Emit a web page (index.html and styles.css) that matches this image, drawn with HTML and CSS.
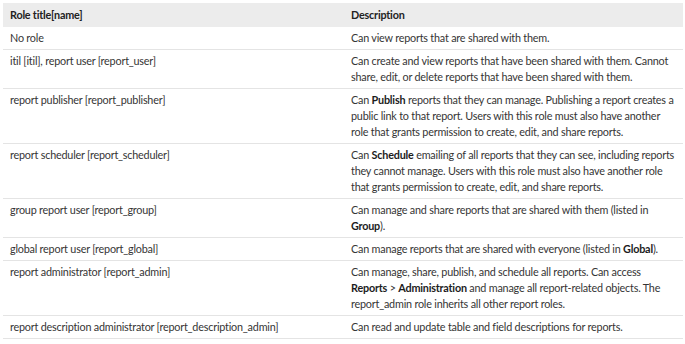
FILE: index.html
```html
<!DOCTYPE html>
<html lang="en">
<head>
    <meta charset="UTF-8">
    <title>Report roles</title>
    <link rel="stylesheet" href="styles.css">
</head>
<body>
    <table class="roles-table">
        <colgroup>
            <col class="col-role">
            <col class="col-desc">
        </colgroup>
        <thead>
            <tr>
                <th>Role title[name]</th>
                <th>Description</th>
            </tr>
        </thead>
        <tbody>
            <tr>
                <td>No role</td>
                <td>Can view reports that are shared with them.</td>
            </tr>
            <tr>
                <td>itil [itil], report user [report_user]</td>
                <td>Can create and view reports that have been shared with them. Cannot share, edit, or delete reports that have been shared with them.</td>
            </tr>
            <tr>
                <td>report publisher [report_publisher]</td>
                <td>Can <strong>Publish</strong> reports that they can manage. Publishing a report creates a public link to that report. Users with this role must also have another role that grants permission to create, edit, and share reports.</td>
            </tr>
            <tr>
                <td>report scheduler [report_scheduler]</td>
                <td>Can <strong>Schedule</strong> emailing of all reports that they can see, including reports they cannot manage. Users with this role must also have another role that grants permission to create, edit, and share reports.</td>
            </tr>
            <tr>
                <td>group report user [report_group]</td>
                <td>Can manage and share reports that are shared with them (listed in <strong>Group</strong>).</td>
            </tr>
            <tr>
                <td>global report user [report_global]</td>
                <td>Can manage reports that are shared with everyone (listed in <strong>Global</strong>).</td>
            </tr>
            <tr>
                <td>report administrator [report_admin]</td>
                <td>Can manage, share, publish, and schedule all reports. Can access <strong>Reports</strong> &gt; <strong>Administration</strong> and manage all report-related objects. The report_admin role inherits all other report roles.</td>
            </tr>
            <tr>
                <td>report description administrator [report_description_admin]</td>
                <td>Can read and update table and field descriptions for reports.</td>
            </tr>
        </tbody>
    </table>
</body>
</html>
```

FILE: styles.css
```css
/* --- page --- */
body {
    margin: 0;
    padding: 3px 2px 0 3px;
    background: #fff;
    color: #353535;
    font-family: "Lato", "Liberation Sans", sans-serif;
    font-size: 10.8px;
    letter-spacing: -0.2px;
    line-height: 16px;
}

/* --- roles table --- */
.roles-table {
    width: 680px;
    border-collapse: collapse;
    table-layout: fixed;
}
.roles-table .col-role {
    width: 341px;
}

.roles-table th {
    background-color: #ececec;
    color: #222;
    font-weight: bold;
    text-align: left;
    padding: 4px 7px;
}

.roles-table td {
    vertical-align: top;
    padding: 3px 7px;
    border-bottom: 1px solid #e4e4e4;
}

.roles-table strong {
    color: #1c1c1c;
}
```
